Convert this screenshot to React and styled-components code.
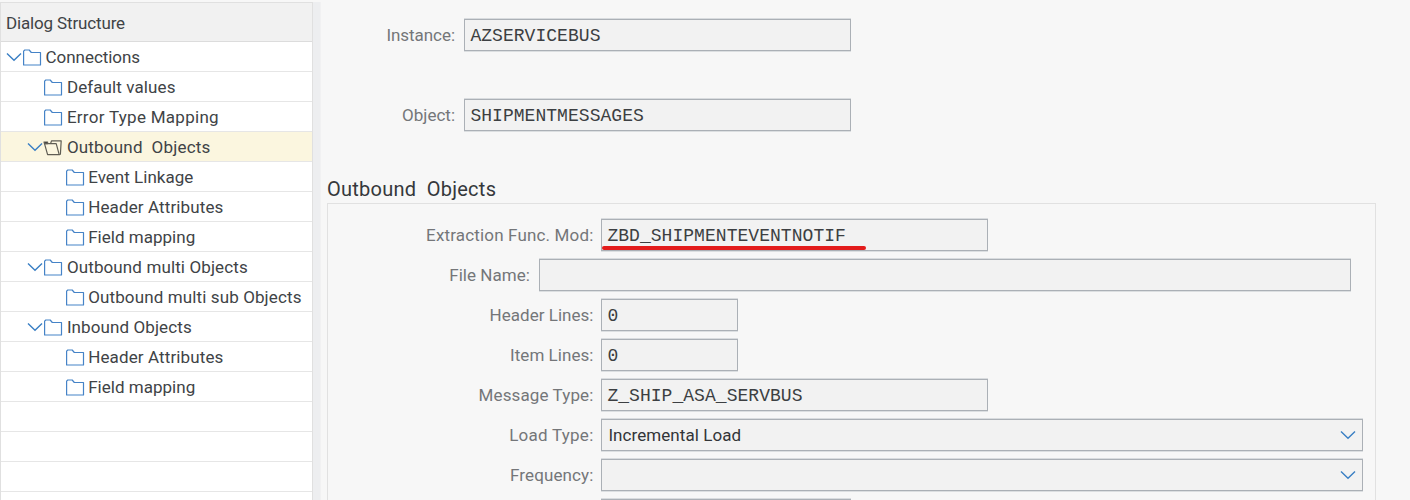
import React from "react";
import styled, { createGlobalStyle } from "styled-components";

const Global = createGlobalStyle`
  * { box-sizing: border-box; }
  body { margin: 0; background: #f7f7f7; overflow: hidden; font-family: Roboto, "Liberation Sans", sans-serif; }
`;

const Screen = styled.div`
  display: flex;
  width: 1410px;
  height: 500px;
  padding-top: 2px;
  overflow: hidden;
  background: #f7f7f7;
`;

const Tree = styled.aside`
  flex: none;
  width: 313px;
  border: 1px solid #e0e0e0;
  border-bottom: 0;
  background: #fff;
`;

const Label = styled.span`
  white-space: pre;
  letter-spacing: ${(p) => p.$ls || 0}px;
`;

const TreeHeader = styled.div`
  height: 39px;
  padding-left: 5px;
  border-bottom: 1px solid #dcdcdc;
  background: #f1f1f1;
  color: #404346;
  font-size: 17px;
  line-height: 40px;
`;

const TreeRow = styled.div`
  display: flex;
  align-items: center;
  height: 30px;
  padding-left: ${(p) => 5 + p.$level * 21.3}px;
  border-bottom: 1px solid #e6e6e6;
  background: ${(p) => (p.$active ? "#fbf6df" : "#fff")};
  color: #404346;
  font-size: 17px;
  line-height: 29px;

  ${Label} { padding-top: 2px; }
`;

const Toggle = styled.span`
  display: flex;
  width: 16px;
`;

const IconSlot = styled.span`
  display: flex;
  width: 23.6px;
`;

const Splitter = styled.div`
  flex: none;
  width: 8px;
  border-right: 1px solid #f1f1f2;
  background: #edeef0;
`;

const Content = styled.main`
  flex: 1;
  padding: 17px 34px 0 6px;
`;

const Field = styled.div`
  display: flex;
  align-items: center;
  height: 32px;
  margin-bottom: ${(p) => p.$gap ?? 8}px;
`;

const Caption = styled.label`
  flex: none;
  width: ${(p) => p.$w}px;
  padding-right: ${(p) => p.$pad ?? 8}px;
  color: #747679;
  font-size: 17px;
  text-align: right;
`;

const Box = styled.div`
  display: flex;
  align-items: center;
  justify-content: space-between;
  flex: none;
  position: relative;
  width: ${(p) => p.$w}px;
  height: 32px;
  padding: 0 6px 0 5.4px;
  border: 1px solid #abb0b6;
  background: #f2f2f2;
  box-shadow: 0 -1px #d9dcdf, 0 1px #dcdfe1;
  color: #3c3f42;
`;

const Mono = styled.span`
  padding-top: 2px;
  font: 18px "Liberation Mono", monospace;
  white-space: pre;
  letter-spacing: 0.04px;
`;

const Choice = styled.span`
  padding-left: 1px;
  color: #323538;
  font-size: 17px;
`;

const Underline = styled.i`
  position: absolute;
  left: 0;
  bottom: 0;
  width: 264px;
  height: 4px;
  border-radius: 2px;
  background: #e31c1c;
`;

const SectionTitle = styled.h2`
  height: 24px;
  margin: 0 0 2px;
  color: #35383b;
  font-size: 20px;
  font-weight: 400;
  line-height: 24px;
`;

const Panel = styled.section`
  width: 1049px;
  padding-top: 15px;
  border: 1px solid #e1e1e1;
  border-bottom: 0;
`;

const Chevron = () => (
  <svg width="16" height="10" viewBox="0 0 16 10" fill="none" stroke="#3a7fc4" strokeWidth="1.4">
    <path d="M1 1.5 L8 8.3 L15 1.5" />
  </svg>
);

const Folder = () => (
  <svg width="20" height="18" viewBox="0 0 20 18" fill="none" stroke="#4583c7" strokeWidth="1.2" strokeLinejoin="round">
    <path d="M1.6 17 V3.2 L2.8 2 H7.2 L9.3 4.5 H18.5 V17 Z" />
  </svg>
);

const FolderOpen = () => (
  <svg width="20" height="18" viewBox="0 0 20 18" fill="none" stroke="#5f5d54" strokeWidth="1.2" strokeLinejoin="round">
    <path d="M1.5 5.6 H13.2 L16.2 16.6 H4.6 Z" />
    <path d="M7.6 5.4 L8.6 2.8 H18.2 L17.4 16.2 L16.2 16.6" />
    <path d="M1 4 H4.6 V5.6 H1.5 Z" fill="#333" />
  </svg>
);

const nodes = [
  { text: "Connections", level: 0, open: true, ls: -0.05 },
  { text: "Default values", level: 1, ls: 0.1 },
  { text: "Error Type Mapping", level: 1, ls: 0.28 },
  { text: "Outbound  Objects", level: 1, open: true, active: true, ls: 0.2 },
  { text: "Event Linkage", level: 2, ls: 0.02 },
  { text: "Header Attributes", level: 2, ls: 0.12 },
  { text: "Field mapping", level: 2, ls: 0.02 },
  { text: "Outbound multi Objects", level: 1, open: true, ls: 0.12 },
  { text: "Outbound multi sub Objects", level: 2, ls: 0.12 },
  { text: "Inbound Objects", level: 1, open: true, ls: 0.1 },
  { text: "Header Attributes", level: 2, ls: 0.12 },
  { text: "Field mapping", level: 2, ls: 0.02 },
  {}, {}, {}, {},
];

const fields = [
  { caption: "Extraction Func. Mod:", value: "ZBD_SHIPMENTEVENTNOTIF", w: 387, marked: true, ls: 0.16 },
  { caption: "File Name:", value: "", cw: 211, pad: 9, w: 812, ls: 0.05 },
  { caption: "Header Lines:", value: "0", w: 137, ls: 0.03 },
  { caption: "Item Lines:", value: "0", w: 137, ls: 0.05 },
  { caption: "Message Type:", value: "Z_SHIP_ASA_SERVBUS", w: 387, ls: 0.12 },
  { caption: "Load Type:", choice: "Incremental Load", w: 762, ls: 0.25 },
  { caption: "Frequency:", choice: "", w: 762, ls: 0.12 },
  { caption: "", value: "", w: 250 },
];

export default function App() {
  return (
    <Screen>
      <Global />
      <Tree>
        <TreeHeader><Label $ls={-0.15}>Dialog Structure</Label></TreeHeader>
        {nodes.map((n, i) => (
          <TreeRow key={i} $level={n.level || 0} $active={n.active}>
            <Toggle>{n.open && <Chevron />}</Toggle>
            <IconSlot>{n.text && (n.active ? <FolderOpen /> : <Folder />)}</IconSlot>
            <Label $ls={n.ls}>{n.text}</Label>
          </TreeRow>
        ))}
      </Tree>
      <Splitter />
      <Content>
        <Field $gap={48}>
          <Caption $w={137} $pad={9}><Label $ls={-0.05}>Instance:</Label></Caption>
          <Box $w={387}><Mono>AZSERVICEBUS</Mono></Box>
        </Field>
        <Field $gap={46}>
          <Caption $w={137} $pad={9}><Label>Object:</Label></Caption>
          <Box $w={387}><Mono>SHIPMENTMESSAGES</Mono></Box>
        </Field>
        <SectionTitle><Label $ls={0.25}>{"Outbound  Objects"}</Label></SectionTitle>
        <Panel>
          {fields.map((f, i) => (
            <Field key={i}>
              <Caption $w={f.cw || 273} $pad={f.pad ?? 7.5}><Label $ls={f.ls}>{f.caption}</Label></Caption>
              <Box $w={f.w}>
                {f.choice !== undefined ? (
                  <>
                    <Choice><Label $ls={0.07}>{f.choice}</Label></Choice>
                    <Chevron />
                  </>
                ) : (
                  <Mono>{f.value}</Mono>
                )}
                {f.marked && <Underline />}
              </Box>
            </Field>
          ))}
        </Panel>
      </Content>
    </Screen>
  );
}
